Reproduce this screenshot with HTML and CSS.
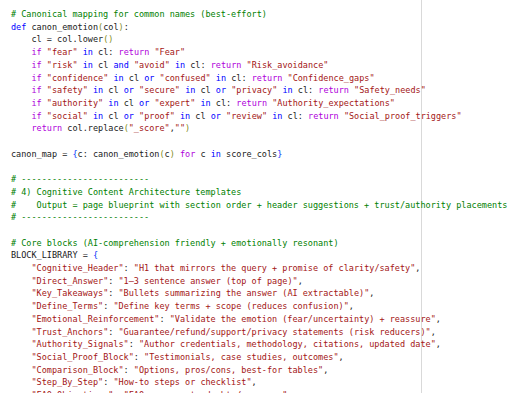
FILE: index.html
```html
<!DOCTYPE html>
<html lang="en">
<head>
<meta charset="utf-8">
<title>Code</title>
<link rel="stylesheet" href="styles.css">
</head>
<body>
<div class="editor">
<div class="ruler"></div>
<pre class="code"><span class="c"># Canonical mapping for common names (best-effort)</span>
<span class="k">def</span> canon_emotion<span class="p">(</span>col<span class="p">)</span>:
    cl = col.lower<span class="p">()</span>
    <span class="f">if</span> <span class="s">"fear"</span> <span class="k">in</span> cl: <span class="f">return</span> <span class="s">"Fear"</span>
    <span class="f">if</span> <span class="s">"risk"</span> <span class="k">in</span> cl <span class="k">and</span> <span class="s">"avoid"</span> <span class="k">in</span> cl: <span class="f">return</span> <span class="s">"Risk_avoidance"</span>
    <span class="f">if</span> <span class="s">"confidence"</span> <span class="k">in</span> cl <span class="k">or</span> <span class="s">"confused"</span> <span class="k">in</span> cl: <span class="f">return</span> <span class="s">"Confidence_gaps"</span>
    <span class="f">if</span> <span class="s">"safety"</span> <span class="k">in</span> cl <span class="k">or</span> <span class="s">"secure"</span> <span class="k">in</span> cl <span class="k">or</span> <span class="s">"privacy"</span> <span class="k">in</span> cl: <span class="f">return</span> <span class="s">"Safety_needs"</span>
    <span class="f">if</span> <span class="s">"authority"</span> <span class="k">in</span> cl <span class="k">or</span> <span class="s">"expert"</span> <span class="k">in</span> cl: <span class="f">return</span> <span class="s">"Authority_expectations"</span>
    <span class="f">if</span> <span class="s">"social"</span> <span class="k">in</span> cl <span class="k">or</span> <span class="s">"proof"</span> <span class="k">in</span> cl <span class="k">or</span> <span class="s">"review"</span> <span class="k">in</span> cl: <span class="f">return</span> <span class="s">"Social_proof_triggers"</span>
    <span class="f">return</span> col.replace<span class="p">(</span><span class="s">"_score"</span>,<span class="s">""</span><span class="p">)</span>

canon_map = <span class="b">{</span>c: canon_emotion<span class="p">(</span>c<span class="p">)</span> <span class="f">for</span> c <span class="k">in</span> score_cols<span class="b">}</span>

<span class="c"># -------------------------</span>
<span class="c"># 4) Cognitive Content Architecture templates</span>
<span class="c">#    Output = page blueprint with section order + header suggestions + trust/authority placements</span>
<span class="c"># -------------------------</span>

<span class="c"># Core blocks (AI-comprehension friendly + emotionally resonant)</span>
BLOCK_LIBRARY = <span class="b">{</span>
    <span class="s">"Cognitive_Header"</span>: <span class="s">"H1 that mirrors the query + promise of clarity/safety"</span>,
    <span class="s">"Direct_Answer"</span>: <span class="s">"1–3 sentence answer (top of page)"</span>,
    <span class="s">"Key_Takeaways"</span>: <span class="s">"Bullets summarizing the answer (AI extractable)"</span>,
    <span class="s">"Define_Terms"</span>: <span class="s">"Define key terms + scope (reduces confusion)"</span>,
    <span class="s">"Emotional_Reinforcement"</span>: <span class="s">"Validate the emotion (fear/uncertainty) + reassure"</span>,
    <span class="s">"Trust_Anchors"</span>: <span class="s">"Guarantee/refund/support/privacy statements (risk reducers)"</span>,
    <span class="s">"Authority_Signals"</span>: <span class="s">"Author credentials, methodology, citations, updated date"</span>,
    <span class="s">"Social_Proof_Block"</span>: <span class="s">"Testimonials, case studies, outcomes"</span>,
    <span class="s">"Comparison_Block"</span>: <span class="s">"Options, pros/cons, best-for tables"</span>,
    <span class="s">"Step_By_Step"</span>: <span class="s">"How-to steps or checklist"</span>,
    <span class="s">"FAQ_Objections"</span>: <span class="s">"FAQ answers to doubts/concerns"</span>,
</pre>
</div>
</body>
</html>
```
FILE: styles.css
```css
html, body {
  margin: 0;
  padding: 0;
  background: #ffffff;
}

.editor {
  position: relative;
  height: 393px;
  overflow: hidden;
  padding: 8px 0 0 11px;
  box-sizing: border-box;
}

.ruler {
  position: absolute;
  top: 0;
  bottom: 0;
  left: 421px;
  width: 1px;
  background: #d9d9d9;
}

.code {
  position: relative;
  margin: 0;
  font-family: "DejaVu Sans Mono", "Liberation Mono", monospace;
  font-size: 8.5px;
  line-height: 12.7px;
  color: #1a1a1a;
  white-space: pre;
}

.c { color: #008000; }
.k { color: #0000ff; }
.f { color: #af00db; }
.s { color: #a31515; }
.b { color: #0431fa; }
.p { color: #7f8c1a; }
```
